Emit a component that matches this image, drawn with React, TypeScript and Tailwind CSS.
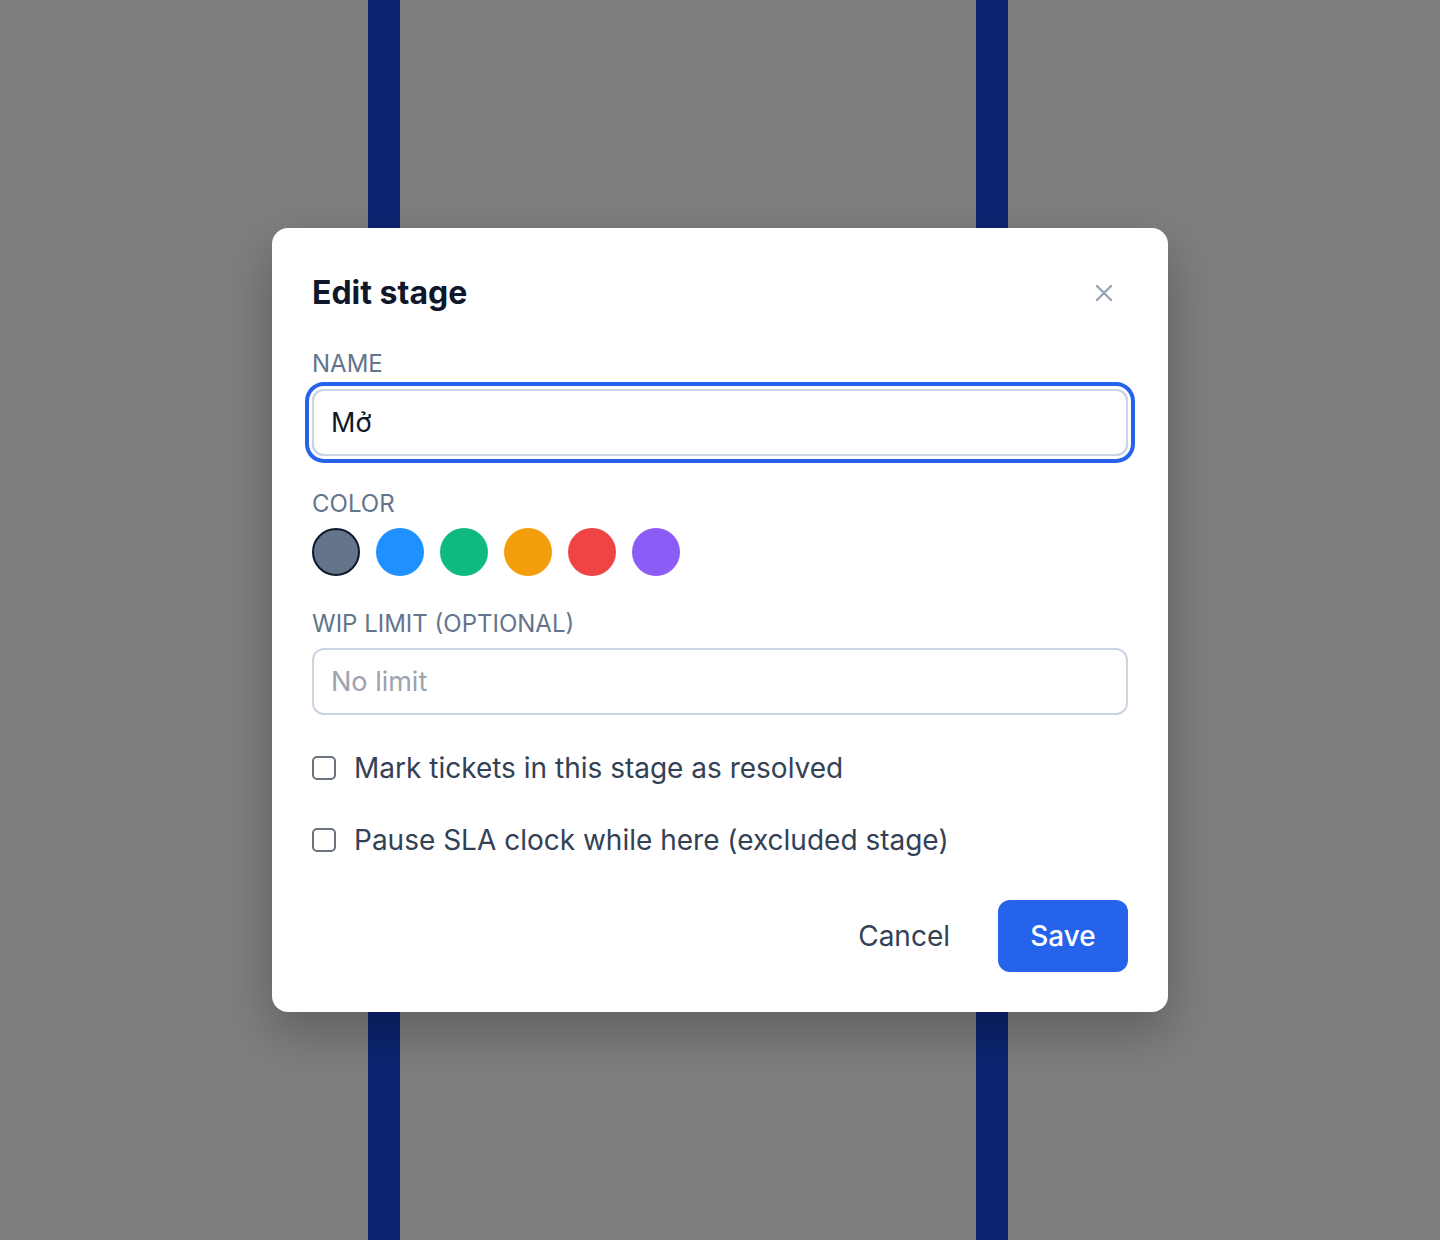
import React, { useState } from "react";
import { X } from "lucide-react";

const COLORS = ["#64748b", "#1e90ff", "#10b981", "#f59e0b", "#ef4444", "#8b5cf6"];

function Check({ label }: { label: string }) {
  const [on, setOn] = useState(false);
  return (
    <label className="flex h-[36px] items-center gap-[18px] cursor-pointer">
      <span
        onClick={() => setOn(!on)}
        className={
          "flex h-[24px] w-[24px] shrink-0 items-center justify-center rounded-[5px] border-2 " +
          (on ? "border-[#2563eb] bg-[#2563eb]" : "border-[#6b7280] bg-white")
        }
      />
      <span className="text-[28px] text-[#334155]">{label}</span>
    </label>
  );
}

export default function App() {
  const [name, setName] = useState("Mở");
  const [color, setColor] = useState(0);
  const [wip, setWip] = useState("");

  return (
    <div
      className="relative h-[1240px] w-[1440px] overflow-hidden bg-[#7d7e80]"
      style={{ fontFamily: "Inter, 'Noto Sans', sans-serif" }}
    >
      {/* columns of the page underneath */}
      <div className="flex h-full">
        <div className="ml-[368px] h-full w-[32px] bg-[#0c2470]" />
        <div className="ml-[576px] h-full w-[32px] bg-[#0c2470]" />
      </div>

      <div className="absolute left-[272px] top-[228px] w-[896px] rounded-2xl bg-white px-[40px] pb-[40px] pt-[40px] shadow-[0_20px_50px_rgba(0,0,0,0.25)]">
        <div className="flex h-[50px] items-center justify-between">
          <h1 className="text-[32px] font-bold text-[#0f172a]">Edit stage</h1>
          <button className="mr-[4px] flex h-[40px] w-[40px] items-center justify-center text-[#94a3b8]">
            <X size={28} strokeWidth={2} />
          </button>
        </div>

        <div className="mt-[31px] h-[30px] text-[24px] leading-[30px] uppercase text-[#64748b]">Name</div>
        <input
          value={name}
          onChange={(e) => setName(e.target.value)}
          className="mt-[10px] block h-[67px] w-full rounded-xl border-2 border-[#cbd5e1] px-[17px] text-[27px] text-[#0f172a] outline-none ring-4 ring-[#2563eb] ring-offset-[3px]"
        />

        <div className="mt-[33px] h-[30px] text-[24px] leading-[30px] uppercase text-[#64748b]">Color</div>
        <div className="mt-[9px] flex gap-[16px]">
          {COLORS.map((c, i) => (
            <button
              key={c}
              onClick={() => setColor(i)}
              className={
                "h-[48px] w-[48px] rounded-full " + (color === i ? "border-2 border-[#0f172a]" : "")
              }
              style={{ backgroundColor: c }}
            />
          ))}
        </div>

        <div className="mt-[33px] h-[30px] text-[24px] leading-[30px] uppercase text-[#64748b]">
          WIP limit (optional)
        </div>
        <input
          value={wip}
          onChange={(e) => setWip(e.target.value)}
          placeholder="No limit"
          className="mt-[9px] block h-[67px] w-full rounded-xl border-2 border-[#cbd5e1] px-[17px] text-[27px] text-[#0f172a] outline-none placeholder:text-[#9ca3af]"
        />

        <div className="mt-[35px]">
          <Check label="Mark tickets in this stage as resolved" />
        </div>
        <div className="mt-[36px]">
          <Check label="Pause SLA clock while here (excluded stage)" />
        </div>

        <div className="mt-[42px] flex items-center justify-end gap-[24px]">
          <button className="h-[72px] px-[24px] text-[28px] text-[#334155]">Cancel</button>
          <button className="h-[72px] w-[130px] rounded-xl bg-[#2563eb] text-[28px] font-medium text-white">
            Save
          </button>
        </div>
      </div>
    </div>
  );
}
